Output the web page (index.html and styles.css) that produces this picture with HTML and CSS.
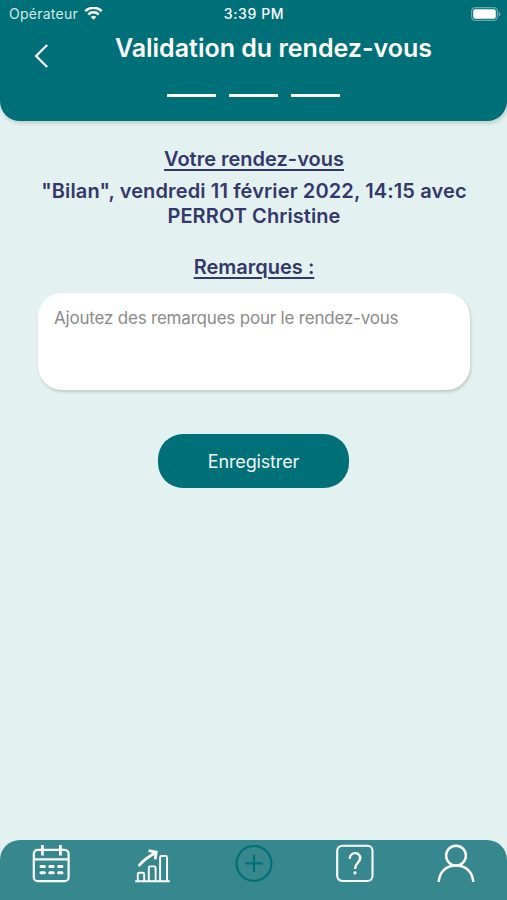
FILE: index.html
```html
<!DOCTYPE html>
<html lang="fr">
<head>
    <meta charset="UTF-8">
    <meta name="viewport" content="width=device-width, initial-scale=1.0">
    <title>Validation du rendez-vous</title>
    <link rel="stylesheet" href="styles.css">
</head>
<body>

    <header class="header">
        <!-- Status bar -->
        <div class="status-bar">
            <div class="carrier">
                <span class="carrier-name">Opérateur</span>
                <svg class="wifi" width="19" height="14" viewBox="0 0 19 14" fill="none" stroke="#fff" stroke-width="2.5">
                    <path d="M1.2 4.2a11.8 11.8 0 0 1 16.6 0"/>
                    <path d="M4.3 7.5a7.4 7.4 0 0 1 10.4 0"/>
                    <path d="M9.5 12.8 6.7 10a4 4 0 0 1 5.6 0z" fill="#fff" stroke="none"/>
                </svg>
            </div>
            <span class="clock">3:39 PM</span>
            <svg class="battery" width="30" height="14" viewBox="0 0 30 14">
                <rect x=".6" y=".6" width="25.8" height="12.8" rx="3.6" fill="none" stroke="#69a9ad" stroke-width="1.2"/>
                <rect x="2.2" y="2.3" width="22.6" height="9.4" rx="2" fill="#fff"/>
                <path d="M27.6 4.7c2.4.6 2.4 4 0 4.6z" fill="#69a9ad"/>
            </svg>
        </div>

        <div class="title-bar">
            <a class="back" href="#" aria-label="Retour">
                <svg width="14" height="24" viewBox="0 0 14 24" fill="none" stroke="#fff" stroke-width="2.2">
                    <path d="M13.2 1 2.1 12l11.1 11"/>
                </svg>
            </a>
            <h1 class="title">Validation du rendez-vous</h1>
        </div>

        <div class="steps">
            <span class="step"></span>
            <span class="step"></span>
            <span class="step"></span>
        </div>
    </header>

    <main class="content">
        <h2 class="heading">Votre rendez-vous</h2>
        <p class="summary"><span class="summary-line">"Bilan", vendredi 11 février 2022, 14:15 avec</span> <span class="summary-line name">PERROT Christine</span></p>
        <h2 class="heading remarks">Remarques :</h2>
        <textarea class="remarks-input" placeholder="Ajoutez des remarques pour le rendez-vous"></textarea>
        <button class="save" type="button">Enregistrer</button>
    </main>

    <!-- Bottom tabs -->
    <nav class="tabs">
        <a class="tab" href="#" aria-label="Calendrier">
            <svg width="40" height="40" viewBox="0 0 40 40" fill="none" stroke="#fff" stroke-width="2.2">
                <rect x="2.8" y="5.8" width="34.8" height="31.4" rx="4"/>
                <path d="M2.8 15.4h34.8"/>
                <path d="M11.4 1v10.4M29.4 1v10.4" stroke-width="2.8"/>
                <path d="M10 22.4h3.4M18.8 22.4h3.4M27.6 22.4H31M10 28.7h3.4M18.8 28.7h3.4M27.6 28.7H31" stroke-width="3" stroke-linecap="round"/>
            </svg>
        </a>
        <a class="tab" href="#" aria-label="Statistiques">
            <svg width="40" height="40" viewBox="0 0 40 40" fill="none" stroke="#fff" stroke-width="1.9">
                <path d="M3.2 37.2h34.6"/>
                <path d="M5.8 37v-6.8q0-1.4 1.4-1.4h3.6q1.4 0 1.4 1.4V37M16.8 37V23.8q0-1.4 1.4-1.4h4q1.4 0 1.4 1.4V37M28.1 37V13.4q0-1.4 1.4-1.4h4.2q1.4 0 1.4 1.4V37"/>
                <path d="M7.4 21.2Q13 14.5 23.6 8.8" stroke-width="2.8" stroke-linecap="round"/>
                <path d="m16.6 6.7 7.6 1.5-1 7.2" stroke-width="2.8"/>
            </svg>
        </a>
        <a class="tab" href="#" aria-label="Ajouter">
            <svg width="40" height="40" viewBox="0 0 40 40" fill="none" stroke="#007078" stroke-width="2.2">
                <circle cx="20" cy="19.4" r="17.4"/>
                <path d="M20 10.7v17.4M11.3 19.4h17.4"/>
            </svg>
        </a>
        <a class="tab" href="#" aria-label="Aide">
            <svg width="40" height="40" viewBox="0 0 40 40" fill="none" stroke="#fff" stroke-width="2.1">
                <rect x="2.2" y="1.8" width="35.3" height="35.2" rx="5"/>
                <path d="M14.8 14.7c0-7.2 10.4-7.4 10.4-.6 0 4.8-5.2 4.7-5.2 10.8" stroke-width="2.4"/>
                <circle cx="20" cy="28.9" r="1.6" fill="#fff" stroke="none"/>
            </svg>
        </a>
        <a class="tab" href="#" aria-label="Profil">
            <svg width="40" height="40" viewBox="0 0 40 40" fill="none" stroke="#fff" stroke-width="2.5">
                <circle cx="20" cy="11.6" r="9.9"/>
                <path d="M2.7 38C3.5 27.5 10.3 21.5 20 21.5S36.5 27.5 37.3 38"/>
            </svg>
        </a>
    </nav>

</body>
</html>
```
FILE: styles.css
```css
* { box-sizing: border-box; }

body {
    margin: 0;
    height: 100vh;
    display: flex;
    flex-direction: column;
    background: #e4f1f1;
    font-family: Inter, "Liberation Sans", sans-serif;
    overflow: hidden;
}

.header {
    height: 121px;
    background: #007078;
    color: #fff;
    border-radius: 0 0 20px 20px;
    box-shadow: 1px 2px 4px rgba(0, 50, 55, 0.2);
}

.status-bar {
    display: grid;
    grid-template-columns: 1fr auto 1fr;
    align-items: center;
    height: 27px;
    padding: 0 6px 0 9px;
}

.carrier { display: flex; align-items: center; gap: 6px; }
.carrier-name { font-size: 14px; letter-spacing: 0.25px; color: #d5e8e9; }
.clock { font-size: 14px; font-weight: 500; letter-spacing: 0.6px; margin-right: 2px; }
.battery { justify-self: end; }

.title-bar {
    display: grid;
    grid-template-columns: 80px 1fr 40px;
    height: 57px;
}

.back { padding: 17px 0 0 34px; }
.title { margin: 5px 0 0; font-size: 25px; line-height: 32px; font-weight: 600; text-align: center; white-space: nowrap; }

.steps { display: flex; justify-content: center; gap: 13px; padding-top: 10px; }
.step { width: 49px; height: 2.5px; background: #fff; }

.content {
    flex: 1;
    display: flex;
    flex-direction: column;
    align-items: center;
    padding: 26px 0 0 1px;
    color: #33386b;
}

.heading {
    margin: 0;
    font-size: 20px;
    line-height: 25px;
    font-weight: 600;
    text-decoration: underline;
    text-decoration-thickness: 2px;
    text-underline-offset: 3px;
}

.summary { margin: 7px 0 0; font-size: 20px; line-height: 25px; font-weight: 600; text-align: center; }
.summary-line { display: block; white-space: nowrap; letter-spacing: 0.13px; }
.name { letter-spacing: 0.08px; }
.remarks { margin-top: 26px; }

.remarks-input {
    width: 432px;
    height: 97px;
    margin-top: 13px;
    padding: 14px 16px;
    border: 0;
    border-radius: 24px;
    background: #fff;
    box-shadow: 1px 2px 3px rgba(0, 30, 30, 0.18);
    font: 17px/22px Inter, "Liberation Sans", sans-serif;
    letter-spacing: -0.2px;
    resize: none;
}
.remarks-input::placeholder { color: #8b8b8b; }

.save {
    width: 191px;
    height: 54px;
    margin: 44px 1px 0 0;
    border: 0;
    border-radius: 25px;
    background: #007078;
    color: #f0f8f8;
    font: 18px Inter, "Liberation Sans", sans-serif;
    letter-spacing: -0.15px;
}

.tabs {
    display: flex;
    height: 60px;
    padding-top: 4px;
    background: #36888e;
    border-radius: 20px 20px 0 0;
}
.tab { flex: 1; display: flex; justify-content: center; align-items: flex-start; }
```
